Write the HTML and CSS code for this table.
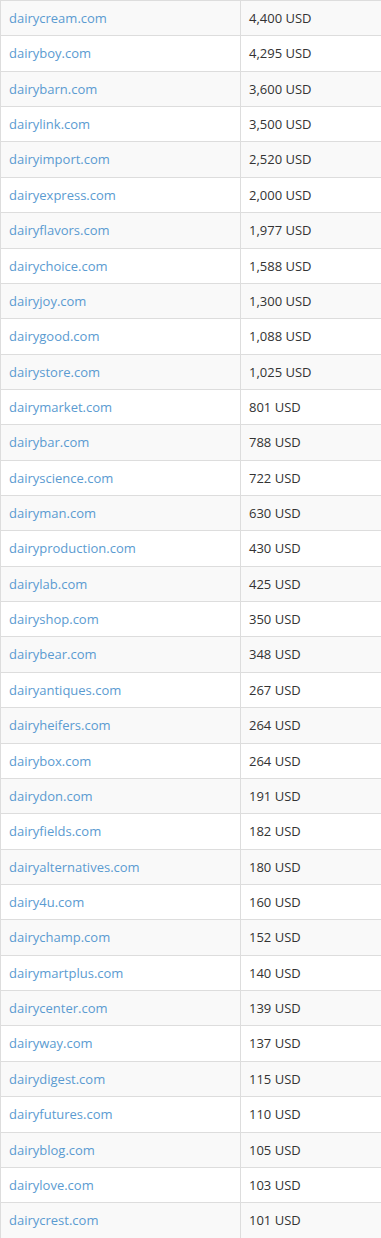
FILE: index.html
```html
<!DOCTYPE html>
<html>
<head>
<meta charset="utf-8">
<link rel="stylesheet" href="styles.css">
</head>
<body>
<table class="domains">
<tbody>
<tr><td class="name"><a href="#">dairycream.com</a></td><td class="price">4,400 USD</td></tr>
<tr><td class="name"><a href="#">dairyboy.com</a></td><td class="price">4,295 USD</td></tr>
<tr><td class="name"><a href="#">dairybarn.com</a></td><td class="price">3,600 USD</td></tr>
<tr><td class="name"><a href="#">dairylink.com</a></td><td class="price">3,500 USD</td></tr>
<tr><td class="name"><a href="#">dairyimport.com</a></td><td class="price">2,520 USD</td></tr>
<tr><td class="name"><a href="#">dairyexpress.com</a></td><td class="price">2,000 USD</td></tr>
<tr><td class="name"><a href="#">dairyflavors.com</a></td><td class="price">1,977 USD</td></tr>
<tr><td class="name"><a href="#">dairychoice.com</a></td><td class="price">1,588 USD</td></tr>
<tr><td class="name"><a href="#">dairyjoy.com</a></td><td class="price">1,300 USD</td></tr>
<tr><td class="name"><a href="#">dairygood.com</a></td><td class="price">1,088 USD</td></tr>
<tr><td class="name"><a href="#">dairystore.com</a></td><td class="price">1,025 USD</td></tr>
<tr><td class="name"><a href="#">dairymarket.com</a></td><td class="price">801 USD</td></tr>
<tr><td class="name"><a href="#">dairybar.com</a></td><td class="price">788 USD</td></tr>
<tr><td class="name"><a href="#">dairyscience.com</a></td><td class="price">722 USD</td></tr>
<tr><td class="name"><a href="#">dairyman.com</a></td><td class="price">630 USD</td></tr>
<tr><td class="name"><a href="#">dairyproduction.com</a></td><td class="price">430 USD</td></tr>
<tr><td class="name"><a href="#">dairylab.com</a></td><td class="price">425 USD</td></tr>
<tr><td class="name"><a href="#">dairyshop.com</a></td><td class="price">350 USD</td></tr>
<tr><td class="name"><a href="#">dairybear.com</a></td><td class="price">348 USD</td></tr>
<tr><td class="name"><a href="#">dairyantiques.com</a></td><td class="price">267 USD</td></tr>
<tr><td class="name"><a href="#">dairyheifers.com</a></td><td class="price">264 USD</td></tr>
<tr><td class="name"><a href="#">dairybox.com</a></td><td class="price">264 USD</td></tr>
<tr><td class="name"><a href="#">dairydon.com</a></td><td class="price">191 USD</td></tr>
<tr><td class="name"><a href="#">dairyfields.com</a></td><td class="price">182 USD</td></tr>
<tr><td class="name"><a href="#">dairyalternatives.com</a></td><td class="price">180 USD</td></tr>
<tr><td class="name"><a href="#">dairy4u.com</a></td><td class="price">160 USD</td></tr>
<tr><td class="name"><a href="#">dairychamp.com</a></td><td class="price">152 USD</td></tr>
<tr><td class="name"><a href="#">dairymartplus.com</a></td><td class="price">140 USD</td></tr>
<tr><td class="name"><a href="#">dairycenter.com</a></td><td class="price">139 USD</td></tr>
<tr><td class="name"><a href="#">dairyway.com</a></td><td class="price">137 USD</td></tr>
<tr><td class="name"><a href="#">dairydigest.com</a></td><td class="price">115 USD</td></tr>
<tr><td class="name"><a href="#">dairyfutures.com</a></td><td class="price">110 USD</td></tr>
<tr><td class="name"><a href="#">dairyblog.com</a></td><td class="price">105 USD</td></tr>
<tr><td class="name"><a href="#">dairylove.com</a></td><td class="price">103 USD</td></tr>
<tr><td class="name"><a href="#">dairycrest.com</a></td><td class="price">101 USD</td></tr>
</tbody>
</table>
</body>
</html>
```

FILE: styles.css
```css
html, body {
  margin: 0;
  padding: 0;
  background: #ffffff;
}

body {
  font-family: "Open Sans", "Liberation Sans", sans-serif;
  font-size: 13px;
  color: #333333;
}

.domains {
  border-collapse: collapse;
  width: 382px;
  table-layout: fixed;
}

.domains tr:nth-child(odd) {
  background: #f9f9f9;
}

.domains td {
  border: 1px solid #dddddd;
  padding: 8px 8px;
  line-height: 18.36px;
  height: 18.36px;
  vertical-align: top;
  white-space: nowrap;
}

.domains td.name {
  width: 223px;
}

.domains td.price {
  border-right: none;
}

.domains a {
  color: #5b9bd1;
  text-decoration: none;
}
```
